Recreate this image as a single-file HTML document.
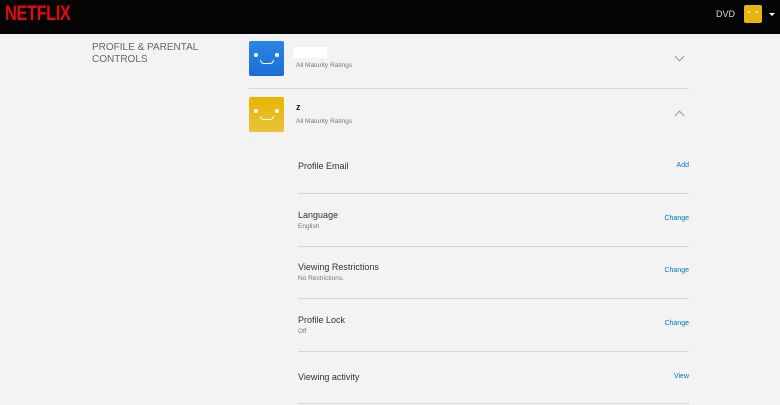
<!DOCTYPE html>
<html><head><style>
*{margin:0;padding:0;box-sizing:border-box}
body{width:780px;height:405px;overflow:hidden;background:#f3f3f3;font-family:"Liberation Sans",sans-serif;position:relative}
.hdr{position:absolute;left:0;top:0;width:780px;height:34px;background:#050505}
.logo{position:absolute;left:5px;top:2px;color:#e50914;font-weight:bold;font-size:20px;letter-spacing:-0.5px;transform:scale(0.82,1.05);transform-origin:left top}
.a{position:absolute}
.av{position:absolute;width:35px;height:35px;border-radius:2px}
.av i{position:absolute;width:4px;height:4px;border-radius:50%;background:#fff;top:12px}
.av b{position:absolute;left:11px;top:19px;width:14px;height:4px;border:1.5px solid #fff;border-top:none;border-radius:0 0 8px 8px}
.t{font-size:9px;color:#333}
.s{font-size:6.5px;color:#777}
.l{font-size:7px;color:#0073c2;text-align:right;width:60px}
.hr{position:absolute;height:1px;background:#d6d6d6}
.chev{position:absolute;width:7px;height:7px;border-left:1px solid #999;border-bottom:1px solid #999}
</style></head><body>
<div class="hdr"></div>
<div class="logo">NETFLIX</div>
<div class="a" style="left:716px;top:9px;color:#ddd;font-size:9px">DVD</div>
<div class="av" style="left:744px;top:5px;width:18px;height:18px;background:#e8b50f"><i style="left:4px;top:6px;width:2px;height:2px"></i><i style="left:12px;top:6px;width:2px;height:2px"></i></div>
<div class="a" style="left:769px;top:13px;border:3px solid transparent;border-top:3px solid #fff"></div>
<div class="a" style="left:92px;top:42px;font-size:10px;color:#666;line-height:12px">PROFILE &amp; PARENTAL<br>CONTROLS</div>
<div class="av" style="left:249px;top:41px;background:linear-gradient(#2c86e6,#1a6dd6)"><i style="left:5px"></i><i style="left:26px"></i><b></b></div>
<div class="a" style="left:293px;top:47px;width:34px;height:11px;background:#fff"></div>
<div class="a s" style="left:296px;top:62px">All Maturity Ratings</div>
<div class="chev" style="left:676px;top:53px;transform:rotate(-45deg)"></div>
<div class="hr" style="left:249px;top:88px;width:440px"></div>
<div class="av" style="left:249px;top:97px;background:linear-gradient(#e8b500,#e9c23a)"><i style="left:5px"></i><i style="left:26px"></i><b></b></div>
<div class="a" style="left:296px;top:102px;font-size:9px;font-weight:bold;color:#222">z</div>
<div class="a s" style="left:296px;top:118px">All Maturity Ratings</div>
<div class="chev" style="left:676px;top:112px;transform:rotate(135deg)"></div>

<div class="a t" style="left:298px;top:161px">Profile Email</div>
<div class="a l" style="left:629px;top:162px">Add</div>
<div class="hr" style="left:298px;top:193px;width:391px"></div>
<div class="a t" style="left:298px;top:210px">Language</div>
<div class="a s" style="left:298px;top:223px">English</div>
<div class="a l" style="left:629px;top:215px">Change</div>
<div class="hr" style="left:298px;top:246px;width:391px"></div>
<div class="a t" style="left:298px;top:262px">Viewing Restrictions</div>
<div class="a s" style="left:298px;top:275px">No Restrictions.</div>
<div class="a l" style="left:629px;top:267px">Change</div>
<div class="hr" style="left:298px;top:298px;width:391px"></div>
<div class="a t" style="left:298px;top:315px">Profile Lock</div>
<div class="a s" style="left:298px;top:328px">Off</div>
<div class="a l" style="left:629px;top:320px">Change</div>
<div class="hr" style="left:298px;top:351px;width:391px"></div>
<div class="a t" style="left:298px;top:372px">Viewing activity</div>
<div class="a l" style="left:629px;top:373px">View</div>
<div class="hr" style="left:298px;top:403px;width:391px"></div>
</body></html>
